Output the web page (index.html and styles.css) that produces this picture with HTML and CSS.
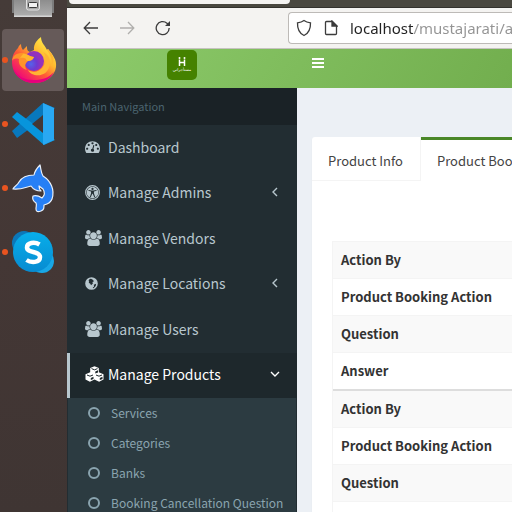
FILE: index.html
```
<!DOCTYPE html>
<html lang="en">
<head>
<meta charset="utf-8">
<title>Mustajarati Admin</title>
<link rel="stylesheet" href="styles.css">
</head>
<body>
<svg class="sprite" aria-hidden="true">
  <symbol id="users" viewBox="0 0 1920 1792"><path d="M593 896q-162 5-265 128h-134q-82 0-138-40.5t-56-118.5q0-353 124-353 6 0 43.5 21t97.5 42.5 119 21.5q67 0 133-23-5 37-5 66 0 139 81 256zm1071 637q0 120-73 189.5t-194 69.5h-874q-121 0-194-69.5t-73-189.5q0-53 3.5-103.5t14-109 26.5-108.5 43-97.5 62-81 85.5-53.5 111.5-20q10 0 43 21.5t73 48 107 48 135 21.5 135-21.5 107-48 73-48 43-21.5q61 0 111.5 20t85.5 53.5 62 81 43 97.5 26.5 108.5 14 109 3.5 103.5zm-1024-1277q0 106-75 181t-181 75-181-75-75-181 75-181 181-75 181 75 75 181zm704 384q0 159-112.5 271.5t-271.5 112.5-271.5-112.5-112.5-271.5 112.5-271.5 271.5-112.5 271.5 112.5 112.5 271.5zm576 225q0 78-56 118.5t-138 40.5h-134q-103-123-265-128 81-117 81-256 0-29-5-66 66 23 133 23 59 0 119-21.5t97.5-42.5 43.5-21q124 0 124 353zm-128-609q0 106-75 181t-181 75-181-75-75-181 75-181 181-75 181 75 75 181z"/></symbol>
  <symbol id="chevron" viewBox="0 0 10 10"><path d="M7 1 3 5l4 4" fill="none" stroke="currentColor" stroke-width="1.4"/></symbol>
</svg>
<nav class="dock" aria-label="Applications">
  <button class="app app-first" aria-label="Files">
    <svg width="44" height="17" viewBox="0 0 44 17"><defs><linearGradient id="fg" x2="0" y2="1"><stop stop-color="#8d8d8d"/><stop offset="1" stop-color="#b0b0b0"/></linearGradient></defs><path d="M1 0h42v13H1z" fill="#7c7c7c"/><path d="M3 0h38v17H3z" fill="url(#fg)"/><path d="M3 15.500h38v1.500H3z" fill="#d5d5d5"/><rect x="15.500" y="-5" width="13" height="15" rx="2" fill="#a9a9a9" stroke="#e2e2e2"/><rect x="17.500" y="2.500" width="9" height="5" rx="1" fill="#f2f2f2" stroke="#3c3c3c"/></svg>
  </button>
  <button class="app app-current" aria-label="Firefox">
    <svg width="46" height="48" viewBox="0 0 46 48"><defs><linearGradient id="fx" x1=".85" y1=".1" x2=".2" y2=".9"><stop stop-color="#fff04a"/><stop offset=".35" stop-color="#ffb82e"/><stop offset=".62" stop-color="#ff5a36"/><stop offset="1" stop-color="#ef0878"/></linearGradient><radialGradient id="fp" cx=".35" cy=".65"><stop stop-color="#5663e8"/><stop offset=".6" stop-color="#7038d0"/><stop offset="1" stop-color="#9332bd"/></radialGradient></defs><path d="M1 26C1 19 4 15 7 12c1-3 3-4 3-4 0 3 1 5 2 6l4-4c0 3 0 5 3 6l4-2C22 8 27 3 30 1c0 6 4 8 6 13l1-1c5 6 9 11 8 18-1 9-10 16-22 16S1 38 1 26z" fill="url(#fx)"/><path d="M2 32c4 9 12 12 21 12 8 0 15-2 20-8-4 8-11 11-20 11S4 41 2 32z" fill="#e6007d"/><circle cx="23" cy="25" r="10" fill="url(#fp)"/><path d="M30 1c0 6 4 8 6 13 4 6 6 11 4 17 6-8 0-14-3-18l-1 1c-2-5-6-7-6-13zM32 16c3 3 4 10 0 15-4 5-10 6-15 3 4 8 21 8 22-7 0-6-3-9-7-11z" fill="#ffb433"/><path d="M1 25c1-7 5-8 12-8 3 1 4 3 10 4-1 3-4 4-6 4-4 3-3 7-1 9-6-2-9-6-8-11-4-1-6 0-7 2z" fill="#ff922a"/><path d="M12 18c4-1 6 3 11 3-1 3-4 4-7 4-1-3-3-4-7-3z" fill="#ffb52e"/></svg>
  </button>
  <button class="app" aria-label="Visual Studio Code">
    <svg width="44" height="44" viewBox="0 0 44 44"><path d="M1 29 32 1l12 5-11 10L6 36z" fill="#0878bd"/><path d="m1 15 5-5 38 28-11 5z" fill="#0795dc"/><path d="m32 1 11 5v32l-11 5z" fill="#29a8f3"/><path d="M32 13v18L21 22z" fill="#443735"/></svg>
  </button>
  <button class="app" aria-label="Dolphin database client">
    <svg width="44" height="50" viewBox="0 0 44 50"><path d="M2 26c1-3 4-3 6-7 3-5 9-7 15-7 1-5 3-7 6-10 1 4 1 8 3 11 8 5 12 14 9 23-1 3-4 5-8 6 0 3 0 5-3 6-3 1-5 1-5-2 0-3 1-4 0-6-3-2-4-4-3-7 4-1 6 0 9 2 3-3 3-6 1-9l-4-3c0 2 1 4 2 5-4 0-8-2-10-5-5 1-10 4-18 3z" fill="#267ff5" stroke="#e8f0fa" stroke-width="1.200" stroke-linejoin="round"/></svg>
  </button>
  <button class="app" aria-label="Skype">
    <svg width="44" height="44" viewBox="0 0 44 44"><defs><linearGradient id="sk" x2="0" y2="1"><stop stop-color="#08aeea"/><stop offset="1" stop-color="#078bd1"/></linearGradient></defs><circle cx="13" cy="13" r="12" fill="#0c77b8"/><circle cx="31" cy="31" r="12" fill="#18a7e6"/><circle cx="22" cy="22" r="20" fill="url(#sk)"/><path d="M28.500 14.500c-5-3-12.500-2-12.500 3 0 6 13 3 13 9.500 0 6-9 6-13.500 3" fill="none" stroke="#fff" stroke-width="4.500"/></svg>
  </button>
</nav>
<div class="browser">
  <div class="tabstrip"><div class="browser-tab"></div></div>
  <div class="toolbar">
    <button class="tool" aria-label="Back"><svg width="16" height="14" viewBox="0 0 16 14"><path d="M15 7H1.500M7 1 1.200 7 7 13"/></svg></button>
    <button class="tool tool-off" aria-label="Forward" disabled><svg width="16" height="14" viewBox="0 0 16 14"><path d="M1 7h13.500M9 1l5.800 6L9 13"/></svg></button>
    <button class="tool" aria-label="Reload"><svg width="16" height="16" viewBox="0 0 16 16"><path d="M14.200 8A6.500 6.500 0 1 1 12 3.200l2 1.800"/><path d="M15 1v5h-5z" fill="currentColor" stroke="none"/></svg></button>
    <div class="urlbar">
      <svg width="16" height="18" viewBox="0 0 16 18"><path d="M8 1.500c2 1.500 4 2 6.500 2.300C14.700 10 12.500 14.500 8 16.500 3.500 14.500 1.300 10 1.500 3.800 4 3.500 6 3 8 1.500z"/></svg>
      <svg width="14" height="16" viewBox="0 0 14 16"><path d="M2.500 1.500H8L12.500 6v7.500a1 1 0 0 1-1 1h-9a1 1 0 0 1-1-1v-11a1 1 0 0 1 1-1z"/><path d="M8 1v5h5z" fill="currentColor"/></svg>
      <input class="address" type="text" aria-label="Address" value="localhost/mustajarati/admin">
    </div>
  </div>
  <header class="topbar">
    <a class="logo" href="#" aria-label="Mustajarati"><svg width="30" height="30" viewBox="0 0 30 30"><rect width="30" height="30" rx="5" fill="#458200"/><path d="M12.500 9.500V16M17.500 9.500V16M12 12.500h6" fill="none" stroke="#fff" stroke-width="1.500"/><circle cx="12.500" cy="8" r="1" fill="#fff"/><circle cx="17.500" cy="8" r="1" fill="#fff"/><text class="logo-name" x="15" y="21" text-anchor="middle" fill="#fff">مستأجراتي</text></svg></a>
    <button class="burger" aria-label="Toggle navigation"><svg width="12" height="10" viewBox="0 0 12 10"><path d="M0 0h12v2H0zM0 4h12v2H0zM0 8h12v2H0z"/></svg></button>
  </header>
  <div class="page">
    <aside class="sidebar">
      <div class="nav-title">Main Navigation</div>
      <ul class="menu">
        <li><a href="#"><svg class="icon" viewBox="0 0 1792 1792"><path d="M384 1152q0-53-37.500-90.500t-90.500-37.500-90.500 37.500-37.500 90.500 37.500 90.500 90.500 37.500 90.500-37.500 37.500-90.500zm192-448q0-53-37.500-90.500t-90.500-37.500-90.500 37.500-37.500 90.500 37.500 90.500 90.500 37.500 90.500-37.500 37.500-90.500zm428 481l101-382q6-26-7.500-48.500t-38.500-29.500-48 6.500-30 39.500l-101 382q-60 5-107 43.500t-63 98.500q-20 77 20 146t117 89 146-20 89-117q16-60-6-117t-72-91zm660-33q0-53-37.500-90.500t-90.500-37.500-90.500 37.500-37.500 90.500 37.500 90.500 90.500 37.500 90.500-37.500 37.500-90.500zm-640-640q0-53-37.500-90.500t-90.500-37.500-90.500 37.500-37.500 90.500 37.500 90.500 90.500 37.500 90.500-37.500 37.500-90.500zm448 192q0-53-37.500-90.500t-90.500-37.500-90.500 37.500-37.500 90.500 37.500 90.500 90.500 37.500 90.500-37.500 37.500-90.500zm320 448q0 261-141 483-19 29-54 29h-1402q-35 0-54-29-141-221-141-483 0-182 71-348t191-286 286-191 348-71 348 71 286 191 191 286 71 348z"/></svg><span>Dashboard</span></a></li>
        <li><a href="#"><svg class="icon" viewBox="0 0 16 16"><circle cx="8" cy="8" r="7.300" fill="none" stroke="currentColor" stroke-width="1.200"/><path fill-rule="evenodd" d="M8 1.800a6.200 6.200 0 1 1 0 12.400A6.200 6.200 0 0 1 8 1.800zM8 3a1.200 1.200 0 1 0 0 2.400A1.200 1.200 0 0 0 8 3zM3.800 5.200l-.2.900 2.900.8v1.800l-1.300 4 .9.300L7.700 9.300h.6L9.900 13l.9-.3-1.300-4V6.900l2.900-.8-.2-.9-3.200.6H7z"/></svg><span>Manage Admins</span><svg class="arrow"><use href="#chevron"/></svg></a></li>
        <li><a href="#"><svg class="icon icon-wide"><use href="#users"/></svg><span>Manage Vendors</span></a></li>
        <li><a href="#"><svg class="icon icon-small" viewBox="0 0 14 14"><path fill-rule="evenodd" d="M7 .2a6.800 6.800 0 1 1 0 13.600A6.800 6.800 0 0 1 7 .2zM6.500 2 5 2.200 3.800 4l.7 1-.5 1.200 1.700 1 .8 1.600L8.500 7 8 5.500l1.500-.7L8.800 3.300zM9.500 8.300l2.500-1-.5 2.500-2.200 2.400-1-.7 1.500-1.300z"/></svg><span>Manage Locations</span><svg class="arrow"><use href="#chevron"/></svg></a></li>
        <li><a href="#"><svg class="icon icon-wide"><use href="#users"/></svg><span>Manage Users</span></a></li>
        <li class="active"><a href="#"><svg class="icon icon-cubes" viewBox="0 0 19 16"><path d="m9.500.3 4.300 1.700v4.300l4.700 2v5.200l-4.400 2.200-4.600-2.200-4.600 2.200L.5 13.500V8.300l4.700-2V2z"/><path d="M6.500 2.600 9.500 3.800l3-1.200M2 9l3 1.200L8 9M11 9l3 1.200L17 9" fill="none" stroke="#1e282c"/><path d="M10.300 5.400v2.200L13 6.500V4.300zM5.800 11.900v2.200l2.700-1.100v-2.200zM14.800 11.900v2.200l2.700-1.100v-2.200z" fill="#1e282c"/></svg><span>Manage Products</span><svg class="arrow arrow-open"><use href="#chevron"/></svg></a></li>
      </ul>
      <ul class="submenu">
        <li><a href="#"><i class="ring"></i>Services</a></li>
        <li><a href="#"><i class="ring"></i>Categories</a></li>
        <li><a href="#"><i class="ring"></i>Banks</a></li>
        <li><a href="#"><i class="ring"></i>Booking Cancellation Question</a></li>
      </ul>
    </aside>
    <main class="content">
      <section class="card">
        <div class="tabs" role="tablist">
          <button class="tab" role="tab" aria-selected="false">Product Info</button>
          <button class="tab tab-on" role="tab" aria-selected="true">Product Booking</button>
        </div>
        <div class="panel">
          <table class="facts">
            <tbody>
              <tr><th scope="row">Action By</th></tr>
              <tr><th scope="row">Product Booking Action</th></tr>
              <tr><th scope="row">Question</th></tr>
              <tr><th scope="row">Answer</th></tr>
            </tbody>
            <tbody>
              <tr><th scope="row">Action By</th></tr>
              <tr><th scope="row">Product Booking Action</th></tr>
              <tr><th scope="row">Question</th></tr>
              <tr><th scope="row">Answer</th></tr>
            </tbody>
          </table>
        </div>
      </section>
    </main>
  </div>
</div>
</body>
</html>
```
FILE: styles.css
```
* { box-sizing: border-box; }
body {
  margin: 0;
  height: 100vh;
  display: flex;
  overflow: hidden;
  font-family: "Noto Sans CJK SC", "Noto Sans", sans-serif;
  font-size: 13px;
  color: #333;
}
ul { list-style: none; margin: 0; padding: 0; }
a { color: inherit; text-decoration: none; }
button { font: inherit; border: 0; padding: 0; background: none; color: inherit; }
svg { display: block; flex: none; fill: currentColor; }
.sprite { position: absolute; width: 0; height: 0; }

.dock {
  flex: 0 0 67px;
  display: flex;
  flex-direction: column;
  gap: 2px;
  padding-left: 2px;
  background: linear-gradient(#453b38, #443735 50%, #3f3533);
}
.app {
  width: 62px;
  height: 62px;
  display: flex;
  align-items: center;
  gap: 3px;
  border-radius: 4px;
}
.app::before {
  content: "";
  width: 6px;
  height: 6px;
  border-radius: 50%;
  background: #e95420;
}
.app-first { height: 27px; align-items: flex-start; }
.app-first::before { background: none; }
.app-current { background: #665a59; }

.browser { flex: 1; min-width: 0; display: flex; flex-direction: column; }
.tabstrip { height: 8px; background: #4a4840; border-bottom: 1px solid #33322d; padding-left: 2px; }
.browser-tab { width: 221px; height: 4px; background: #f4f3f1; border-radius: 0 0 4px 4px; }
.toolbar {
  height: 41px;
  display: flex;
  align-items: center;
  gap: 20px;
  padding-left: 16px;
  background: #f4f3f1;
  border-bottom: 1px solid #c6c3c0;
  color: #3c3c3c;
}
.toolbar svg { fill: none; stroke: currentColor; stroke-width: 1.3; }
.tool { width: 16px; display: flex; justify-content: center; }
.tool-off { color: #b0afad; }
.urlbar {
  flex: 1;
  min-width: 0;
  height: 32px;
  margin-left: 97px;
  display: flex;
  align-items: center;
  gap: 12px;
  padding-left: 7px;
  background: #fff;
  border: 1px solid #bdbab7;
  border-right: 0;
  border-radius: 4px 0 0 4px;
}
.address {
  flex: 1;
  min-width: 0;
  border: 0;
  padding: 0;
  font: 15px "Noto Sans", sans-serif;
  color: #8f8f8f;
  background: linear-gradient(to right, #222 64px, #939393 64px);
  -webkit-background-clip: text;
  background-clip: text;
  -webkit-text-fill-color: transparent;
}

.topbar {
  height: 39px;
  display: flex;
  align-items: flex-start;
  background: linear-gradient(120deg, #8dcb6b, #72ae4e);
  color: #fff;
}
.logo { width: 230px; padding-top: 1px; display: flex; justify-content: center; }
.logo-name { font: 4px "DejaVu Sans", sans-serif; }
.burger { padding: 9px 15px; }

.page { flex: 1; min-height: 0; display: flex; }
.sidebar {
  flex: 0 0 230px;
  min-width: 0;
  display: flex;
  flex-direction: column;
  background: #222d32;
  color: #b8c7ce;
  white-space: nowrap;
}
.nav-title {
  padding: 0 15px;
  line-height: 37px;
  font-size: 11px;
  color: #4b646f;
  background: #1a2226;
}
.menu { display: grid; grid-auto-rows: 1fr; min-height: 273px; font-size: 14px; }
.menu a {
  height: 100%;
  display: flex;
  align-items: center;
  gap: 8px;
  padding: 0 17px 2px 15px;
  border-left: 3px solid transparent;
}
.menu .active a { color: #fff; background: #1e282c; border-left-color: #b8c7ce; }
.icon { width: 15px; height: 15px; }
.icon-wide { width: 17px; height: 16px; margin-right: -2px; }
.icon-small { width: 13px; height: 13px; margin-right: 2px; }
.icon-cubes { width: 19px; height: 16px; margin-right: -4px; }
.arrow { width: 10px; height: 10px; margin-left: auto; }
.arrow-open { transform: rotate(-90deg); }
.submenu { flex: 1; margin: 0 1px; background: #2c3b41; color: #8aa4af; font-size: 12px; }
.submenu a { display: flex; align-items: center; gap: 11px; padding-left: 20px; line-height: 30px; }
.ring { width: 12px; height: 12px; border: 2px solid; border-radius: 50%; }

.content { flex: 1; min-width: 0; padding: 49px 0 0 15px; background: #ecf0f5; overflow: hidden; }
.card { height: 100%; background: #fff; border-radius: 3px 0 0 0; box-shadow: 0 1px 1px rgba(0, 0, 0, .1); }
.tabs { display: flex; height: 44px; border-bottom: 1px solid #f4f4f4; color: #444; white-space: nowrap; }
.tab { padding: 3px 17px 0 16px; border-right: 1px solid #f4f4f4; }
.tab-on { height: 44px; padding: 0 16px; background: #fff; border-top: 3px solid #4a8728; border-right: 0; }
.panel { padding: 60px 0 0 20px; }
.facts { width: 100%; border-spacing: 0; border-left: 1px solid #f4f4f4; }
.facts th { padding: 8px; line-height: 20px; text-align: left; white-space: nowrap; border-top: 1px solid #f4f4f4; }
.facts tr:nth-child(odd) th { background: #f9f9f9; }
.facts tbody + tbody tr:first-child th { border-top: 2px solid #ddd; }
```
